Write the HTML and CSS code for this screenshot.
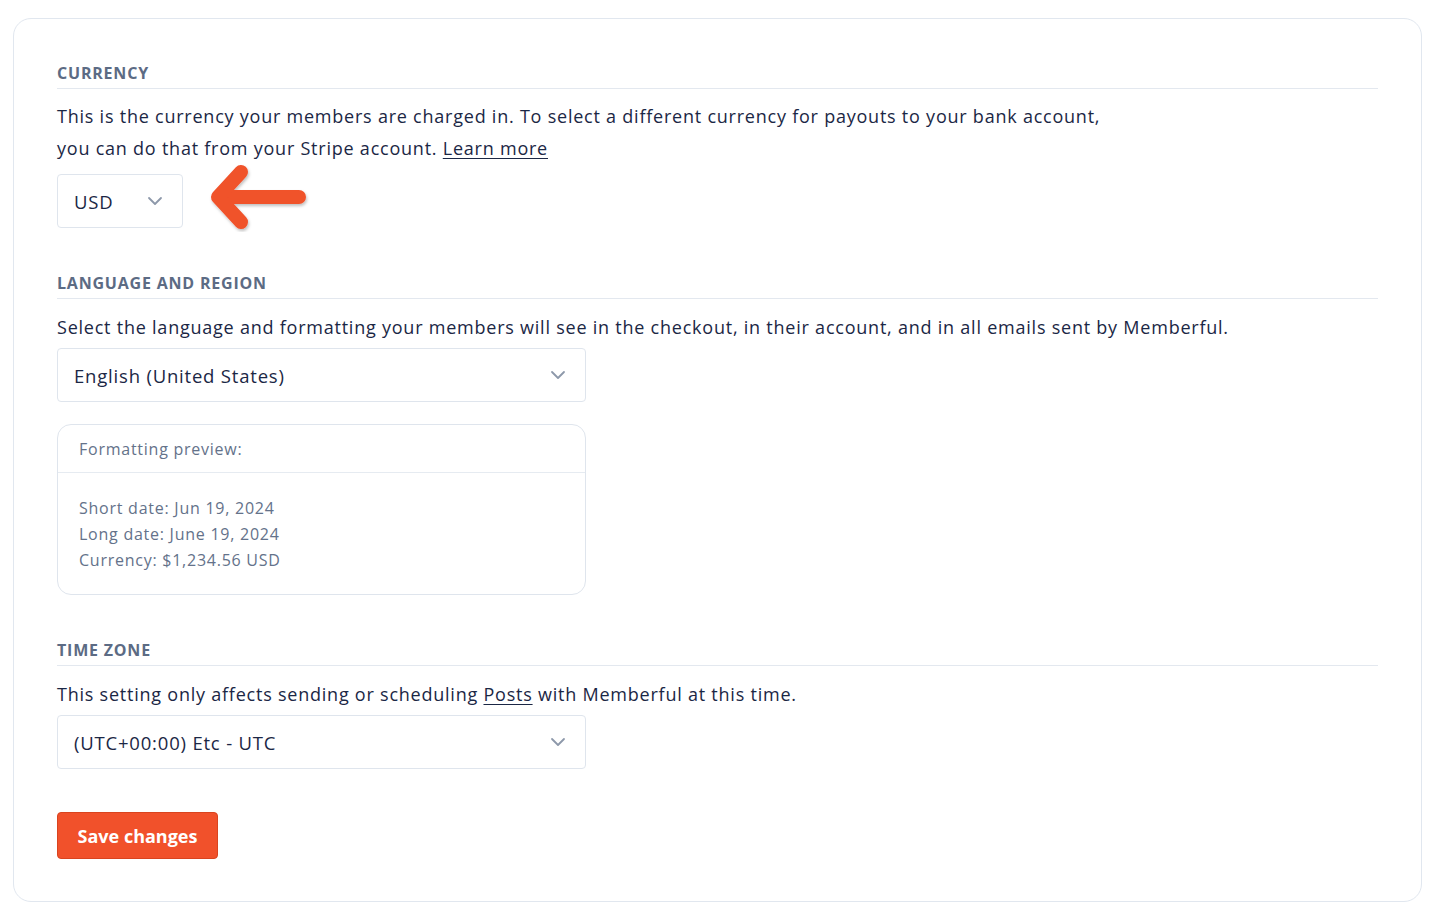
FILE: index.html
```html
<!DOCTYPE html>
<html lang="en">
<head>
<meta charset="utf-8">
<title>Settings</title>
<link rel="stylesheet" href="styles.css">
</head>
<body>
<div class="page">
  <form class="card">
    <section class="section">
      <h3 class="label">CURRENCY</h3>
      <p class="desc desc-currency">This is the currency your members are charged in. To select a different currency for payouts to your bank account,<br>you can do that from your Stripe account. <a href="#">Learn more</a></p>
      <div class="currency-row">
        <div class="select select-small">
          <span>USD</span>
          <svg class="chev" width="16" height="10" viewBox="0 0 16 10"><path d="M2 2l6 6 6-6" fill="none" stroke="#8d98aa" stroke-width="1.8" stroke-linecap="round" stroke-linejoin="round"/></svg>
        </div>
        <svg class="arrow" width="110" height="84" viewBox="0 0 110 84">
          <defs>
            <filter id="sh" x="-20%" y="-20%" width="140%" height="140%">
              <feDropShadow dx="1" dy="2" stdDeviation="1.5" flood-color="#000" flood-opacity="0.25"/>
            </filter>
          </defs>
          <g filter="url(#sh)" fill="none" stroke="#f0522b" stroke-width="14" stroke-linecap="round" stroke-linejoin="round">
            <path d="M98 40H18"/>
            <path d="M40 15L17 40L40 65"/>
          </g>
        </svg>
      </div>
    </section>

    <section class="section">
      <h3 class="label">LANGUAGE AND REGION</h3>
      <p class="desc">Select the language and formatting your members will see in the checkout, in their account, and in all emails sent by Memberful.</p>
      <div class="select select-wide">
        <span>English (United States)</span>
        <svg class="chev" width="16" height="10" viewBox="0 0 16 10"><path d="M2 2l6 6 6-6" fill="none" stroke="#8d98aa" stroke-width="1.8" stroke-linecap="round" stroke-linejoin="round"/></svg>
      </div>
      <div class="preview">
        <div class="preview-head">Formatting preview:</div>
        <div class="preview-body">
          <div>Short date: Jun 19, 2024</div>
          <div>Long date: June 19, 2024</div>
          <div>Currency: $1,234.56 USD</div>
        </div>
      </div>
    </section>

    <section class="section">
      <h3 class="label">TIME ZONE</h3>
      <p class="desc">This setting only affects sending or scheduling <a href="#">Posts</a> with Memberful at this time.</p>
      <div class="select select-wide">
        <span>(UTC+00:00) Etc - UTC</span>
        <svg class="chev" width="16" height="10" viewBox="0 0 16 10"><path d="M2 2l6 6 6-6" fill="none" stroke="#8d98aa" stroke-width="1.8" stroke-linecap="round" stroke-linejoin="round"/></svg>
      </div>
    </section>

    <button type="button" class="btn">Save changes</button>
  </form>
</div>
</body>
</html>
```

FILE: styles.css
```css
* { box-sizing: border-box; }
html, body { margin: 0; padding: 0; background: #ffffff; }
body {
  font-family: "Open Sans", "Lato", "Liberation Sans", sans-serif;
  color: #1b2745;
}
.page {
  padding: 18px 18px 10px 13px;
}
.card {
  display: block;
  border: 1px solid #e1e7ef;
  border-radius: 18px;
  padding: 44px 43px 42px 43px;
  background: #fff;
}
.section { margin-bottom: 45px; }
.label {
  margin: 0;
  font-size: 16px;
  line-height: 20px;
  font-weight: 700;
  letter-spacing: 0.8px;
  color: #5c6b84;
  padding-bottom: 5px;
  border-bottom: 1px solid #e3e8ef;
}
.desc {
  margin: 12px 0 5px;
  font-size: 18px;
  line-height: 32px;
  letter-spacing: 0.77px;
  color: #1b2745;
}
.desc-currency { margin: 11px 0 10px; }
.desc a { color: #1b2745; text-decoration: underline; text-underline-offset: 3px; }
.currency-row {
  display: flex;
  align-items: center;
  gap: 18px;
}
.select {
  display: flex;
  align-items: center;
  justify-content: space-between;
  height: 54px;
  border: 1px solid #dfe5ed;
  border-radius: 4px;
  padding: 0 19px 0 16px;
  font-size: 18.5px;
  letter-spacing: 0.8px;
  color: #1b2745;
  background: #fff;
}
.select-small { width: 126px; }
.select-wide { width: 529px; }
.chev { display: block; }
.arrow { display: block; margin: -19px 0 -15px; }
.preview {
  width: 529px;
  margin-top: 22px;
  border: 1px solid #dfe5ed;
  border-radius: 14px;
  color: #64728a;
  font-size: 16px;
  letter-spacing: 0.75px;
}
.preview-head {
  padding: 12px 21px 10px;
  line-height: 25px;
  border-bottom: 1px solid #e6ebf1;
}
.preview-body {
  padding: 22px 21px 21px;
  line-height: 26px;
}
.btn {
  display: block;
  margin-top: -2px;
  width: 161px;
  height: 47px;
  border: 1px solid #d9441f;
  border-radius: 4px;
  background: #f1512b;
  color: #fff;
  font-family: inherit;
  font-size: 18px;
  font-weight: 700;
  cursor: pointer;
}
```
